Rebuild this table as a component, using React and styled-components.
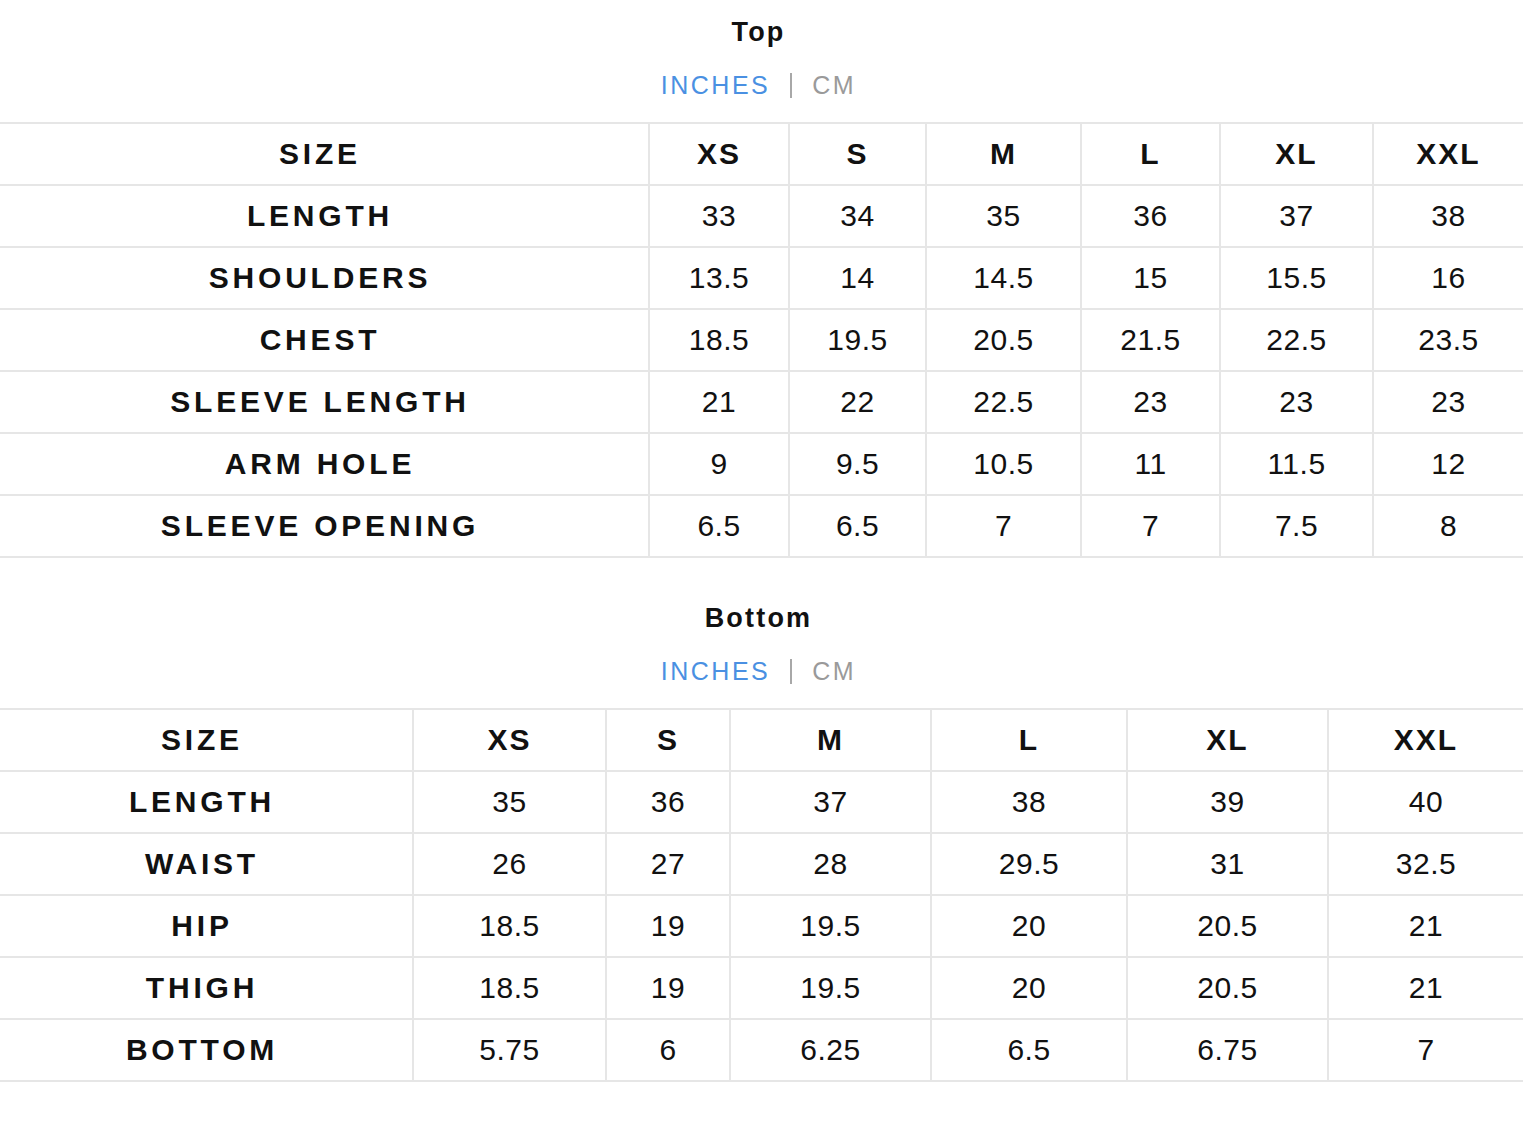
import React from 'react'
import styled, { createGlobalStyle } from 'styled-components';

const GlobalStyle = createGlobalStyle`
    html, body {
        margin: 0;
        padding: 0;
        background: #fff;
    }
    body {
        font-family: "Liberation Sans", Arial, Helvetica, sans-serif;
        color: #111;
    }
`

const charts = [
    {
        title: 'Top',
        widths: [649, 140, 137, 155, 139, 153, 150],
        sizes: ['XS', 'S', 'M', 'L', 'XL', 'XXL'],
        rows: [
            ['LENGTH', '33', '34', '35', '36', '37', '38'],
            ['SHOULDERS', '13.5', '14', '14.5', '15', '15.5', '16'],
            ['CHEST', '18.5', '19.5', '20.5', '21.5', '22.5', '23.5'],
            ['SLEEVE LENGTH', '21', '22', '22.5', '23', '23', '23'],
            ['ARM HOLE', '9', '9.5', '10.5', '11', '11.5', '12'],
            ['SLEEVE OPENING', '6.5', '6.5', '7', '7', '7.5', '8'],
        ],
    },
    {
        title: 'Bottom',
        widths: [413, 193, 124, 201, 196, 201, 195],
        sizes: ['XS', 'S', 'M', 'L', 'XL', 'XXL'],
        rows: [
            ['LENGTH', '35', '36', '37', '38', '39', '40'],
            ['WAIST', '26', '27', '28', '29.5', '31', '32.5'],
            ['HIP', '18.5', '19', '19.5', '20', '20.5', '21'],
            ['THIGH', '18.5', '19', '19.5', '20', '20.5', '21'],
            ['BOTTOM', '5.75', '6', '6.25', '6.5', '6.75', '7'],
        ],
    },
]

const SizeChart = ({ chart }) => {
    return (
        <Section>
            <Title>{chart.title}</Title>
            <Units>
                <Unit active>INCHES</Unit>
                <Divider />
                <Unit>CM</Unit>
            </Units>
            <Table>
                <colgroup>
                    {chart.widths.map((w, id) => (
                        <col key={id} style={{ width: w }} />
                    ))}
                </colgroup>
                <tbody>
                    <tr>
                        <Label>SIZE</Label>
                        {chart.sizes.map((s) => (
                            <Head key={s}>{s}</Head>
                        ))}
                    </tr>
                    {chart.rows.map(([label, ...values]) => (
                        <tr key={label}>
                            <Label>{label}</Label>
                            {values.map((v, id) => (
                                <Cell key={id}>{v}</Cell>
                            ))}
                        </tr>
                    ))}
                </tbody>
            </Table>
        </Section>
    )
}

const App = () => {
    return (
        <Page>
            <GlobalStyle />
            {charts.map((chart) => (
                <SizeChart key={chart.title} chart={chart} />
            ))}
        </Page>
    )
}

const Page = styled.div`
    width: 1523px;
    min-height: 1138px;
    display: flex;
    flex-direction: column;
    gap: 28px;
    background: #fff;
`

const Section = styled.section`
    display: flex;
    flex-direction: column;
    align-items: center;
    padding-top: 12px;
`

const Title = styled.h2`
    margin: 0 6px 0 0;
    font-size: 27px;
    line-height: 40px;
    font-weight: 700;
    letter-spacing: 2.2px;
    color: #111;
`

const Units = styled.div`
    display: flex;
    align-items: center;
    gap: 20px;
    margin: 13px 6px 0 0;
    height: 40px;
`

const Unit = styled.span`
    font-size: 25px;
    letter-spacing: 2.5px;
    color: ${(p) => (p.active ? '#4a90e2' : '#9a9a9a')};
`

const Divider = styled.span`
    width: 2px;
    height: 25px;
    background: #a8a8a8;
`

const Table = styled.table`
    margin-top: 17px;
    width: 100%;
    table-layout: fixed;
    border-collapse: collapse;

    td {
        height: 60px;
        padding: 0;
        text-align: center;
        vertical-align: middle;
        border: 2px solid #e6e6e6;
    }

    td:first-child {
        border-left: none;
    }

    td:last-child {
        border-right: none;
    }
`

const Label = styled.td`
    font-size: 30px;
    font-weight: 700;
    letter-spacing: 3.8px;
    color: #111;
    padding-right: 8px !important;
`

const Head = styled.td`
    font-size: 30px;
    font-weight: 700;
    letter-spacing: 2px;
    color: #111;
`

const Cell = styled.td`
    font-size: 30px;
    letter-spacing: 0.5px;
    color: #111;
`

export default App
